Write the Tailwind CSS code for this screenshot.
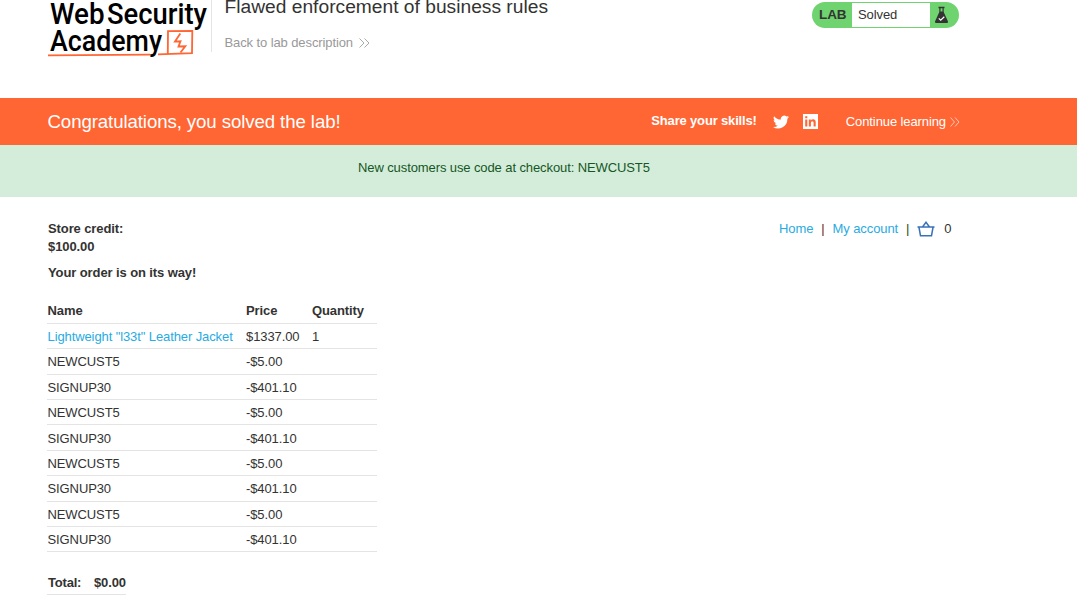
<!DOCTYPE html>
<html lang="en">
<head>
<meta charset="utf-8">
<title>Flawed enforcement of business rules</title>
<script src="https://cdn.jsdelivr.net/npm/@tailwindcss/browser@4"></script>
</head>
<body class="bg-white text-[#333332] font-['Liberation_Sans',Arial,sans-serif] text-[13px] leading-[18px] tracking-[-0.1px] h-[609px] overflow-hidden">
<header class="h-[98px] pl-12 flex items-start">
  <svg class="w-[163px] h-[60px] shrink-0 tracking-normal" viewBox="48 0 163 60" role="img" aria-label="Web Security Academy">
    <g fill="#000" font-family="Roboto, sans-serif" font-weight="500" font-size="29.5">
      <text x="50" y="24.3" textLength="54.500" lengthAdjust="spacingAndGlyphs">Web</text>
      <text x="107" y="24.3" textLength="100" lengthAdjust="spacingAndGlyphs">Security</text>
      <text x="50" y="50.5" textLength="112" lengthAdjust="spacingAndGlyphs">Academy</text>
    </g>
    <g fill="none" stroke="#ff6633">
      <path stroke-width="1.8" d="M48 55.3Q90 55 150 54.6M158 54.4L192 53.2L192.300 30.800L168 31.200L167.800 54"/>
      <path stroke-width="1.8" d="M180.300 33.500L175 41.600L180.500 41.300L178.500 46.500L185.300 46.300L180.500 52.500"/>
    </g>
  </svg>
  <div class="border-l border-[#e4e4e4] h-[52px] pl-[12.5px] flex flex-col">
    <h2 class="text-[19.2px] leading-[22px] -mt-1 whitespace-nowrap tracking-[0.01px]">Flawed enforcement of business rules</h2>
    <a class="flex items-center text-[#999999] mt-[16px] whitespace-nowrap">Back to lab description
      <svg class="ml-[6px] w-[11px] h-[10px]" viewBox="0 0 11 10" fill="none" stroke="#aaa" stroke-width="1"><path d="M.5 .5L5 5L.5 9.500M5.500 .5L10 5L5.500 9.500"/></svg>
    </a>
  </div>
  <div class="ml-auto mr-[118px] mt-[2px] w-[147px] h-[26px] rounded-full bg-[#6fd36f] flex items-center text-[13px] overflow-hidden">
    <b class="w-[40px] pl-[7px] text-[13.5px]">LAB</b>
    <span class="w-[78px] h-6 bg-white pl-[6px] leading-[23px]">Solved</span>
    <svg class="ml-1 w-4 h-[18px]" viewBox="0 0 16 18"><path fill="#333" d="M4.500 .8H10.500V2.300H9.700V6L14 15.500Q14.300 17 12.800 17H2.200Q.7 17 1 15.500L5.300 6V2.300H4.500Z"/><path d="M6.500 2.300H8.500V5.500H6.500Z" fill="#6fd36f"/><path d="M4.800 12.300L6.700 14.200L10.300 10.800" fill="none" stroke="#fff" stroke-width="1.200"/></svg>
  </div>
</header>
<section class="h-[47px] bg-[#ff6633] text-white flex items-center pl-[47.5px] pr-[117px]">
  <h4 class="text-[18.67px] whitespace-nowrap">Congratulations, you solved the lab!</h4>
  <div class="ml-auto flex items-center whitespace-nowrap">
    <b class="-mt-[2px] tracking-[-0.16px]">Share your skills!</b>
    <svg class="ml-4 w-[16px] h-[14px]" viewBox="0 2 24 20" fill="#fff"><path d="M24 4.600a10 10 0 0 1-2.800.8 5 5 0 0 0 2.200-2.700 10 10 0 0 1-3.100 1.200 4.900 4.900 0 0 0-8.400 4.500A14 14 0 0 1 1.700 3.200a4.900 4.900 0 0 0 1.500 6.500 5 5 0 0 1-2.200-.6 4.900 4.900 0 0 0 3.900 4.900 5 5 0 0 1-2.200.1 4.900 4.900 0 0 0 4.600 3.400A10 10 0 0 1 0 19.500 14 14 0 0 0 21.500 7.100 10 10 0 0 0 24 4.600"/></svg>
    <svg class="ml-[14px] w-[15px] h-[15px]" viewBox="0 0 15 15"><path fill="#fff" d="M0 0H15V15H0Z"/><path fill="#f63" d="M2.200 5.500H4.300V12.500H2.200ZM2.200 2.300H4.300V4.300H2.200ZM5.800 5.500H7.800V6.500Q8.500 5.300 10 5.300Q12.700 5.300 12.700 8.200V12.500H10.600V8.700Q10.600 7.200 9.400 7.200Q7.900 7.200 7.900 8.800V12.500H5.800Z"/></svg>
    <a class="ml-[28px] flex items-center">Continue learning
      <svg class="ml-[4px] w-[10px] h-[10px]" viewBox="0 0 10 10" fill="none" stroke="#ffc8b5" stroke-width="1"><path d="M.5 .5L4.500 5L.5 9.500M5 .5L9 5L5 9.500"/></svg>
    </a>
  </div>
</section>
<section class="h-[52px] bg-[#d4edda] text-[#155724] pt-[14px] pl-[358px]">New customers use code at checkout: NEWCUST5</section>
<main class="pl-[47px] pr-[125.5px]">
  <div class="flex justify-between pt-[23px]">
    <div class="font-bold pl-px"><p>Store credit:</p><p>$100.00</p></div>
    <nav class="flex h-[18px] items-center text-[#29abe2]">
      <a>Home</a><span class="mx-2 text-[#6b1717]">|</span><a>My account</a><span class="mx-2 text-[#175217]">|</span>
      <svg class="w-[18px] h-4" viewBox="0 0 18 16" fill="none" stroke="#3a72b8" stroke-width="1.500"><path d="M.5 6H17.500M2 6.500L3.500 14.700H14.500L16 6.500M5.500 6L9 1.300L12.500 6"/></svg>
      <span class="ml-[9px] text-[#333332]">0</span>
    </nav>
  </div>
  <h4 class="font-bold mt-[8px] pl-px">Your order is on its way!</h4>
  <table class="mt-[16px] w-[330px] table-fixed border-collapse [&_td]:p-0 [&_td]:pt-[2px] [&_tr]:border-b [&_tr]:border-[#e4e4e4] [&_tr]:h-[25.4px]">
    <colgroup><col class="w-[199px]"><col class="w-[66px]"><col></colgroup>
    <tbody>
    <tr class="font-bold"><td><span class="pl-[0.5px]">Name</span></td><td>Price</td><td>Quantity</td></tr>
    <tr><td class="text-[#29abe2]"><span class="pl-[0.5px]">Lightweight "l33t" Leather Jacket</span></td><td>$1337.00</td><td>1</td></tr>
    <tr><td><span class="pl-[0.5px]">NEWCUST5</span></td><td>-$5.00</td><td></td></tr>
    <tr><td><span class="pl-[0.5px]">SIGNUP30</span></td><td>-$401.10</td><td></td></tr>
    <tr><td><span class="pl-[0.5px]">NEWCUST5</span></td><td>-$5.00</td><td></td></tr>
    <tr><td><span class="pl-[0.5px]">SIGNUP30</span></td><td>-$401.10</td><td></td></tr>
    <tr><td><span class="pl-[0.5px]">NEWCUST5</span></td><td>-$5.00</td><td></td></tr>
    <tr><td><span class="pl-[0.5px]">SIGNUP30</span></td><td>-$401.10</td><td></td></tr>
    <tr><td><span class="pl-[0.5px]">NEWCUST5</span></td><td>-$5.00</td><td></td></tr>
    <tr><td><span class="pl-[0.5px]">SIGNUP30</span></td><td>-$401.10</td><td></td></tr>
    </tbody>
  </table>
  <div class="mt-[17.5px] w-[79px] h-[25px] border-b border-[#e4e4e4] font-bold flex items-center justify-between pt-[2px]"><span class="pl-px tracking-[-0.2px]">Total:</span><span>$0.00</span></div>
</main>
</body>
</html>
